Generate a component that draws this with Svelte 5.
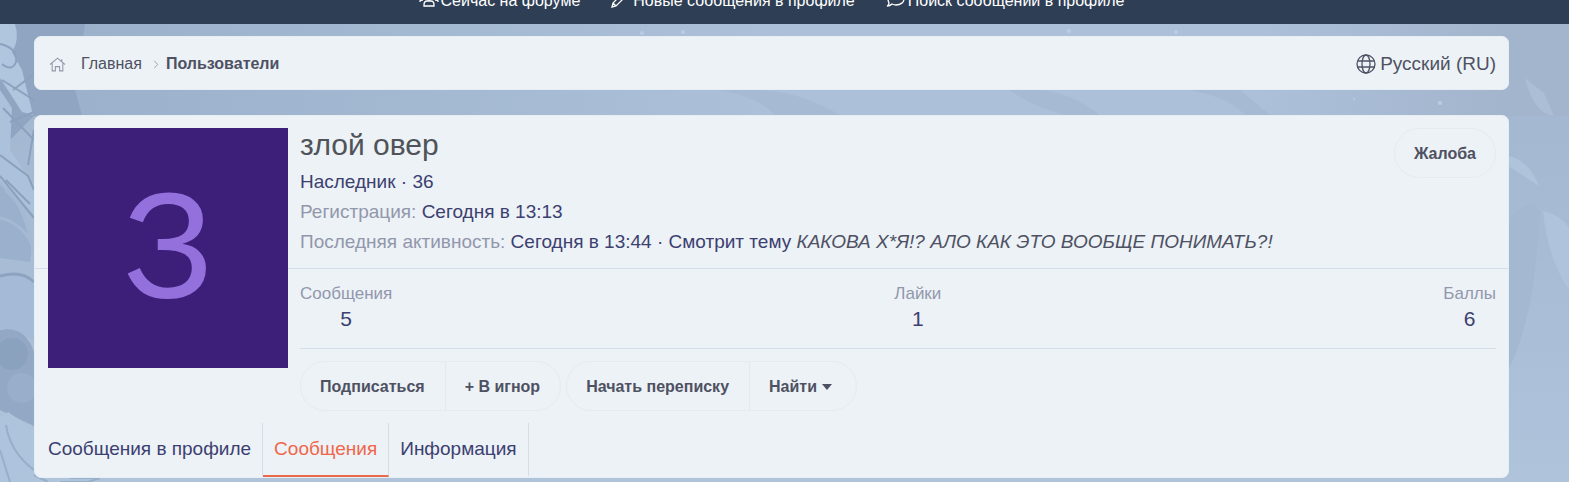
<script>
    const navLinks = [
        { icon: 'users', label: 'Сейчас на форуме' },
        { icon: 'pencil', label: 'Новые сообщения в профиле' },
        { icon: 'comment', label: 'Поиск сообщений в профиле' },
    ];

    const stats = [
        { label: 'Сообщения', value: 5 },
        { label: 'Лайки', value: 1 },
        { label: 'Баллы', value: 6 },
    ];

    const tabs = ['Сообщения в профиле', 'Сообщения', 'Информация'];
    let activeTab = 'Сообщения';
</script>

<div class="page">
    <svg class="backdrop" viewBox="0 0 1569 482" preserveAspectRatio="none" aria-hidden="true">
        <defs>
            <linearGradient id="sky" x1="0" y1="0" x2="0" y2="1">
                <stop offset="0" stop-color="#a3b5cd" />
                <stop offset="0.5" stop-color="#a7bbd5" />
                <stop offset="1" stop-color="#afc3db" />
            </linearGradient>
            <linearGradient id="shine" x1="0" y1="0" x2="1" y2="0">
                <stop offset="0" stop-color="#9aafc9" />
                <stop offset="0.5" stop-color="#acc0d9" />
                <stop offset="0.8" stop-color="#acc0d9" />
                <stop offset="0.96" stop-color="#a3b5cd" />
                <stop offset="1" stop-color="#a3b5cd" />
            </linearGradient>
        </defs>
        <rect width="1569" height="482" fill="url(#sky)" />
        <rect width="1569" height="116" fill="url(#shine)" />
        <path d="M0 24H85L75 90L82 116H34L0 150Z" fill="#8fa5c1" />
        <path d="M0 24H15Q20 40 12 52L22 70L33 115L22 112L0 78Z" fill="#b0c5de" />
        <path d="M0 90L12 108L10 150L34 186V215L0 180Z" fill="#acc1db" />
        <path d="M0 44Q18 48 16 62Q12 72 2 64M2 80L34 100M13 90L34 74M3 108L34 140M10 122L34 112M0 155L28 176L34 190M28 165L34 130M0 176L34 218M6 180L30 204" fill="none" stroke="#8ba1be" stroke-width="2" />
        <path d="M0 185Q38 218 30 262L0 258Z" fill="#9bb0cc" />
        <path d="M0 218Q25 224 34 250M5 190Q24 204 30 240" fill="none" stroke="#a5b9d4" stroke-width="3" />
        <path d="M0 274Q22 270 34 285V340L0 328Z" fill="#a5bad6" />
        <path d="M0 276Q22 270 34 282" fill="none" stroke="#8da4c0" stroke-width="3" />
        <path d="M0 330Q25 325 34 352V426L0 410Z" fill="#93a8c4" />
        <circle cx="12" cy="354" r="16" fill="#8ba2be" />
        <circle cx="22" cy="388" r="15" fill="#98aeca" />
        <path d="M0 418L8 412L34 430V482H0Z" fill="#aec3dc" />
        <path d="M6 425Q10 452 34 470M0 450L10 482M34 475L48 482M70 478H100L88 482H60" fill="none" stroke="#98afca" stroke-width="2" />
        <path d="M1525 78L1544 93L1554 116Q1534 114 1525 78Z" fill="#acbed5" />
        <path d="M1508 156Q1529 160 1539 186L1508 166Z" fill="#afc3db" />
        <path d="M1543 211Q1560 214 1569 228V290Q1548 260 1543 211Z" fill="#afc3dc" />
        <path d="M1508 220Q1530 195 1540 210Q1535 320 1508 370Z" fill="#a4b8d2" />
        <g fill="#bccde2">
            <circle cx="642" cy="33" r="2" />
            <circle cx="683" cy="32" r="2" />
            <circle cx="1069" cy="31" r="2" />
            <circle cx="1176" cy="32" r="2" />
            <circle cx="1440" cy="103" r="2" />
            <circle cx="1354" cy="99" r="1" />
        </g>
        <g fill="#a6bad3">
            <path d="M1010 90Q1030 106 1065 115H1100Q1070 92 1040 90Z" />
            <path d="M720 90Q760 98 775 115H840Q800 92 760 90Z" />
            <path d="M1190 90Q1230 98 1245 115H1270L1240 90Z" />
        </g>
    </svg>

    <nav class="topbar">
        {#each navLinks as link}
            <a href="#top">
                <svg class={link.icon} viewBox="0 0 20 16" aria-hidden="true">
                    {#if link.icon === 'users'}
                        <circle cx="10" cy="5" r="3" />
                        <circle cx="3" cy="4" r="2" />
                        <circle cx="17" cy="4" r="2" />
                        <path d="M5 14V13Q5 9 8 9H12Q15 9 15 13V14ZM1 10V9Q1 8 4 8M19 10V9Q19 8 16 8" />
                    {:else if link.icon === 'pencil'}
                        <path d="M1 15L2 11L11 2L14 5L5 14ZM2 11L5 14M9 4L12 7" />
                    {:else}
                        <path d="M10 1C15 1 18 4 18 7S15 13 10 13Q8 13 6 12Q4 14 1 14Q3 13 3 11Q2 9 2 7C2 4 5 1 10 1Z" />
                        <path d="M6 7H7M10 7H11M14 7H15" />
                    {/if}
                </svg>{link.label}
            </a>
        {/each}
    </nav>

    <main>
        <div class="panel crumbs">
            <a class="home" href="#home" aria-label="Главная">
                <svg viewBox="0 0 16 16">
                    <path d="M1 8L8 2L15 8M3 7V14H6V10H10V14H13V7M12 5V3" />
                </svg>
            </a>
            <a href="#main">Главная</a>
            <svg class="chevron" viewBox="0 0 6 10" aria-hidden="true"><path d="M1 1L5 5L1 9" /></svg>
            <a class="current" href="#members">Пользователи</a>
            <a class="language" href="#language">
                <svg viewBox="0 0 20 20" aria-hidden="true">
                    <circle cx="10" cy="10" r="9" />
                    <ellipse cx="10" cy="10" rx="4" ry="9" />
                    <path d="M2 7H18M2 13H18" />
                </svg>
                Русский (RU)
            </a>
        </div>

        <section class="panel profile">
            <a class="avatar" href="#avatar">З</a>
            <div class="header">
                <div class="about">
                    <h1>злой овер</h1>
                    <p>Наследник · 36</p>
                    <p><span>Регистрация:</span> Сегодня в 13:13</p>
                    <p>
                        <span>Последняя активность:</span> Сегодня в 13:44 · Смотрит тему
                        <a href="#thread">КАКОВА Х*Я!? АЛО КАК ЭТО ВООБЩЕ ПОНИМАТЬ?!</a>
                    </p>
                </div>
                <button class="report">Жалоба</button>
            </div>

            <div class="body">
                <dl>
                    {#each stats as stat}
                        <div>
                            <dt>{stat.label}</dt>
                            <dd>{stat.value}</dd>
                        </div>
                    {/each}
                </dl>
                <div class="actions">
                    <div class="group">
                        <button>Подписаться</button>
                        <button>+ В игнор</button>
                    </div>
                    <div class="group">
                        <button>Начать переписку</button>
                        <button>Найти <i class="caret"></i></button>
                    </div>
                </div>
            </div>

            <div class="tabs" role="tablist">
                {#each tabs as tab}
                    <button
                        role="tab"
                        aria-selected={activeTab === tab}
                        class:active={activeTab === tab}
                        on:click={() => (activeTab = tab)}
                    >{tab}</button>
                {/each}
            </div>
        </section>
    </main>
</div>

<style>
    :global(body) {
        background: #abbfd8;
        color: #3c4070;
        font-family: "Liberation Sans", Arial, sans-serif;
        font-size: 19px;
    }

    .page {
        position: relative;
        overflow: hidden;
        padding-bottom: 4px;
    }

    a {
        color: inherit;
        text-decoration: none;
    }

    svg {
        fill: none;
        stroke: currentColor;
    }

    .backdrop {
        position: absolute;
        inset: 0;
        width: 100%;
        height: 100%;
        z-index: -1;
        stroke: none;
    }

    button {
        background: none;
        border: none;
        color: #4f5163;
        font-family: inherit;
        font-size: 16px;
        font-weight: bold;
        cursor: pointer;
    }

    /* the bar is partly scrolled out of view */
    .topbar {
        display: flex;
        justify-content: center;
        gap: 31px;
        height: 48px;
        margin-top: -24px;
        padding: 0 60px 0 34px;
        background: #2e3e54;
        color: #fff;
        font-size: 16px;
        line-height: 50px;
    }

    .topbar svg {
        width: 20px;
        height: 16px;
        margin-right: 2px;
        stroke-width: 1.3;
        vertical-align: -2px;
    }

    main {
        padding: 12px 60px 0 34px;
    }

    .panel {
        background: #ecf2f6;
        border: 1px solid #e6eef5;
        border-radius: 7px;
        box-sizing: border-box;
    }

    .crumbs {
        display: flex;
        align-items: center;
        height: 54px;
        margin-bottom: 25px;
        padding: 2px 12px 0 14px;
        color: #4f5163;
        font-size: 16px;
    }

    .home {
        display: flex;
        margin-right: 15px;
        color: #9397ac;
    }

    .home svg {
        width: 17px;
        height: 17px;
    }

    .chevron {
        width: 6px;
        height: 9px;
        margin: 0 7px 0 11px;
        color: #9397ac;
    }

    .current {
        font-weight: bold;
    }

    .language {
        display: flex;
        align-items: center;
        gap: 4px;
        margin-left: auto;
        font-size: 19px;
    }

    .language svg {
        width: 20px;
        height: 20px;
        stroke-width: 1.3;
    }

    .profile {
        position: relative;
    }

    .avatar {
        position: absolute;
        top: 12px;
        left: 13px;
        width: 240px;
        height: 240px;
        background: #3d1f7a;
        color: #9370db;
        font-size: 150px;
        line-height: 236px;
        text-align: center;
    }

    .header {
        display: flex;
        justify-content: space-between;
        align-items: flex-start;
        padding: 12px 12px 11px 265px;
        border-bottom: 1px solid #d3deea;
    }

    h1 {
        margin: 0 0 5px;
        color: #505359;
        font-size: 30px;
        font-weight: normal;
        line-height: 34px;
    }

    p {
        margin: 0;
        line-height: 30px;
    }

    p span,
    dt {
        color: #9397ac;
    }

    p a {
        color: #4f5163;
        font-style: italic;
    }

    .report {
        height: 50px;
        padding: 2px 19px 0;
        border: 1px solid #e5ebf2;
        border-radius: 25px;
    }

    .body {
        padding: 0 12px 12px 265px;
    }

    dl {
        display: flex;
        justify-content: space-between;
        margin: 0;
        padding: 13px 0 16px;
        border-bottom: 1px solid #d3deea;
        text-align: center;
    }

    dt {
        font-size: 17px;
        line-height: 24px;
    }

    dd {
        margin: 0;
        font-size: 21px;
        line-height: 26px;
    }

    .actions {
        display: flex;
        gap: 5px;
        padding-top: 12px;
    }

    .group {
        display: flex;
        box-sizing: border-box;
        height: 50px;
        border: 1px solid #e5ebf2;
        border-radius: 25px;
    }

    .group button {
        padding: 2px 20px 0 19px;
    }

    .group button + button {
        border-left: 1px solid #e2e9f0;
    }

    .caret {
        display: inline-block;
        margin: 0 4px 0 1px;
        border: 5px solid transparent;
        border-top: 6px solid #4f5163;
        border-bottom: 0;
        vertical-align: 2px;
    }

    .tabs {
        display: flex;
        padding-left: 2px;
    }

    .tabs button {
        height: 54px;
        padding: 0 11px;
        border-right: 1px solid #d3deea;
        border-bottom: 2px solid transparent;
        color: #3c4070;
        font-size: 19px;
        font-weight: normal;
    }

    .tabs .active {
        border-bottom-color: #e8694c;
        color: #f0664a;
    }
</style>
